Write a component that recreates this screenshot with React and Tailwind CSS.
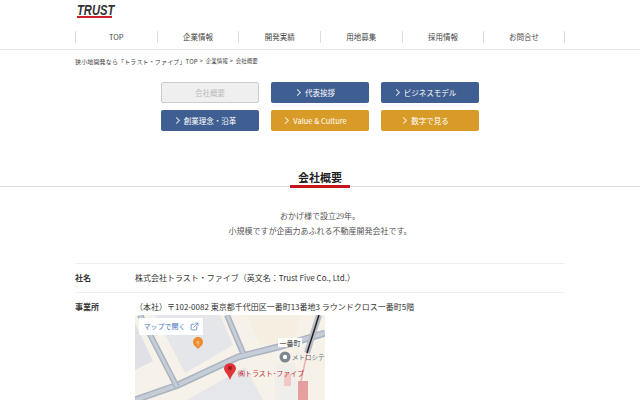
import { ExternalLink } from "lucide-react"

const navItems = ["TOP", "企業情報", "開発実績", "用地募集", "採用情報", "お問合せ"]

const NavBar = () => (
  <nav className="h-[21px] mx-[75px] flex">
    {navItems.map((item) => (
      <div key={item} className="w-[81.67px] h-[12px] mt-[3px] border-l border-[#ddd] last:border-r flex items-center justify-center text-[7.5px] text-[#444]">
        {item}
      </div>
    ))}
  </nav>
)

const SubButton = ({ label, color }) => (
  <div className={`h-[21px] w-[98px] rounded-[2px] flex items-center justify-center text-[7.5px] font-normal text-white ${color}`}>
    <span className="relative">
      <span className="absolute left-[-10px] top-[3px] w-[5px] h-[5px] border-t border-r border-white/80 rotate-45" />
      {label}
    </span>
  </div>
)

const MapDrawing = () => (
  <svg viewBox="0 0 190 85" className="block w-full h-full" xmlns="http://www.w3.org/2000/svg">
    <rect width="190" height="85" fill="#f6f2e9" />
    <path d="M0 8 L0 55 L18 46 Z" fill="#dfe1e6" />
    <path d="M20 0 L85 0 L98 30 L50 58 Z" fill="#e4e6ea" />
    <path d="M112 0 L165 0 L160 24 L125 30 Z" fill="#f5efe1" />
    <path d="M52 85 L110 52 L128 85 Z" fill="#e6e7eb" />
    <path d="M140 50 L160 48 L163 85 L140 85 Z" fill="#f0eeea" />
    <path d="M0 85 L43 70 L103 42 L143 32 L190 18" stroke="#a9b3c1" strokeWidth="7" fill="none" />
    <path d="M0 85 L43 70 L103 42 L143 32 L190 18" stroke="#c6cdd7" strokeWidth="4" fill="none" />
    <path d="M5 0 L42 72" stroke="#a9b3c1" strokeWidth="6" fill="none" />
    <path d="M5 0 L42 72" stroke="#c6cdd7" strokeWidth="3" fill="none" />
    <path d="M92 0 L108 38" stroke="#a9b3c1" strokeWidth="6" fill="none" />
    <path d="M92 0 L108 38" stroke="#c6cdd7" strokeWidth="3" fill="none" />
    <path d="M184 0 L172 38" stroke="#b9bec7" strokeWidth="6" fill="none" />
    <path d="M184 0 L172 38" stroke="#222" strokeWidth="1.5" fill="none" />
    <path d="M172 38 L166 66" stroke="#eeb0ad" strokeWidth="1.5" fill="none" />
    <rect x="163" y="66" width="10" height="19" fill="#e5a09d" />
    <rect x="149" y="59" width="7" height="12" fill="#f0c9c4" />
    <circle cx="63" cy="27" r="5" fill="#ee8b2e" />
    <path d="M59 30 L63 34 L67 30 Z" fill="#ee8b2e" />
    <text x="63" y="29.5" fontSize="6" fill="#fff" textAnchor="middle">ﾘ</text>
    <rect x="143" y="23" width="24" height="9" fill="#fff" />
    <text x="155" y="30.5" fontSize="7" fill="#333" textAnchor="middle" fontFamily="'Noto Sans CJK JP', sans-serif">一番町</text>
    <circle cx="150" cy="42" r="5.5" fill="#7c8791" />
    <circle cx="150" cy="42" r="2.2" fill="#fff" />
    <text x="157" y="45" fontSize="6.5" fill="#606a74" fontFamily="'Noto Sans CJK JP', sans-serif">メトロシテ</text>
    <path d="M95 65 C93 59 89 57 89 53 A6.2 6.2 0 0 1 101 53 C101 57 97 59 95 65 Z" fill="#e0363a" />
    <circle cx="95" cy="53" r="2.2" fill="#a61d20" />
    <text x="103" y="61" fontSize="7" fill="#c5333a" fontFamily="'Noto Sans CJK JP', sans-serif">㈱トラスト･ファイブ</text>
  </svg>
)

export default function App() {
  return (
    <div className="w-[640px] h-[400px] overflow-hidden bg-white" style={{ fontFamily: "'Noto Sans CJK JP', 'Noto Sans', sans-serif" }}>
      <header className="h-[50px] border-b border-[#e5e5e5]">
        <div className="h-[28px] pl-[77px] pt-[3px]">
          <div className="w-[35px]">
            <span className="block h-[13px] w-[47px] origin-left scale-x-[0.75] text-[15px] leading-[13px] font-bold italic text-[#333]" style={{ fontFamily: "'Liberation Sans', sans-serif" }}>TRUST</span>
            <div className="h-[2px] bg-[#d0202c]" />
          </div>
        </div>
        <NavBar />
      </header>

      <div className="px-[75px] h-[22px] flex items-center text-[5.5px] text-[#444]">
        <span className="text-[6px] tracking-[0.15px]">狭小地開発なら「トラスト・ファイブ」TOP</span>
        <span className="ml-[2px]">&gt;</span>
        <span className="ml-[3px]">企業情報</span>
        <span className="ml-[2px]">&gt;</span>
        <span className="ml-[3px]">会社概要</span>
      </div>

      <div className="mt-[10px] w-[318px] ml-[161px] grid grid-cols-3 gap-x-[12px] gap-y-[7px]">
        <div className="h-[21px] w-[98px] rounded-[2px] bg-[#efefef] border border-[#ccc] flex items-center justify-center text-[7.5px] text-[#bbb]">会社概要</div>
        <SubButton label="代表挨拶" color="bg-[#3f5e92]" />
        <SubButton label="ビジネスモデル" color="bg-[#3f5e92]" />
        <SubButton label="創業理念・沿革" color="bg-[#3f5e92]" />
        <SubButton label="Value & Culture" color="bg-[#d99b27]" />
        <SubButton label="数字で見る" color="bg-[#d99b27]" />
      </div>

      <div className="mt-[38px] h-[18px] border-b border-[#ddd] flex justify-center">
        <div className="relative w-[60px] text-center text-[11px] font-bold leading-[16px] text-[#222]">
          会社概要
          <div className="absolute left-0 right-0 top-[16px] h-[3px] bg-[#c4161c]" />
        </div>
      </div>

      <div className="mt-[23px] text-center text-[8px] leading-[14.5px] text-[#555]" style={{ fontFamily: "'Liberation Serif', 'Noto Sans CJK JP', serif" }}>
        <p>おかげ様で設立29年。</p>
        <p>小規模ですが企画力あふれる不動産開発会社です。</p>
      </div>

      <div className="mx-[75px] mt-[24px] border-t border-[#eee]">
        <div className="flex h-[29px] items-center border-b border-[#eee] text-[8px] text-[#333]">
          <div className="w-[60px] font-bold">社名</div>
          <div>株式会社トラスト・ファイブ（英文名：Trust Five Co., Ltd.）</div>
        </div>
        <div className="flex pt-[7px] text-[8px] text-[#333]">
          <div className="w-[60px] font-bold leading-[14px]">事業所</div>
          <div className="w-[430px]">
            <div className="leading-[14px]">（本社）〒102-0082 東京都千代田区一番町13番地3 ラウンドクロス一番町5階</div>
            <div className="relative w-[190px] h-[85px] mt-[1px]">
              <MapDrawing />
              <div className="absolute left-[4px] top-[3px] h-[17px] w-[64px] bg-white flex items-center justify-center gap-[4px] text-[7px] text-[#4a78c0]">
                マップで開く
                <ExternalLink size={9} strokeWidth={2} />
              </div>
            </div>
          </div>
        </div>
      </div>
    </div>
  )
}
